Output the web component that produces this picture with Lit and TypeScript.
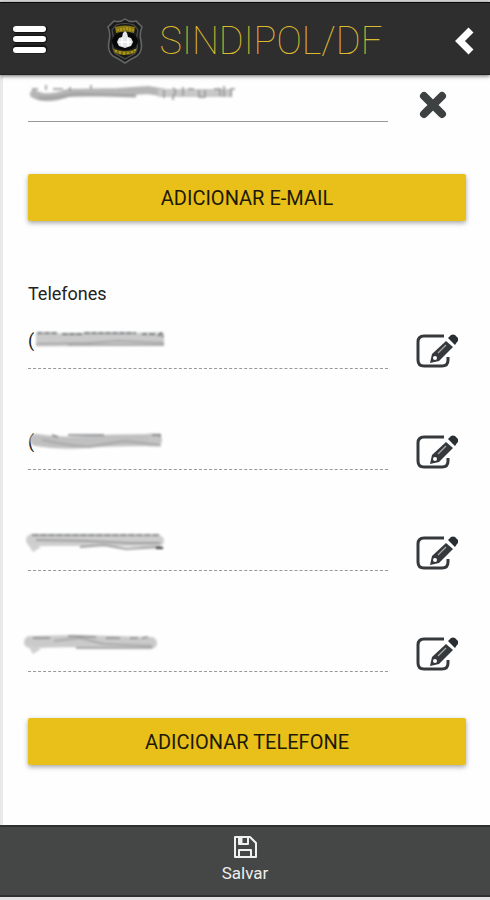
import { LitElement, html, css, svg } from "lit";
import { customElement } from "lit/decorators.js";

const badge = html`<svg class="badge" viewBox="0 0 40 48" aria-hidden="true">
  <path d="M20 2 Q25 6 31 4 L37 10 Q34 17 36 24 Q38 34 32 39 Q26 42 20 46 Q14 42 8 39 Q2 34 4 24 Q6 17 3 10 L9 4 Q15 6 20 2 Z" fill="#1a1a1a" stroke="#626466" stroke-width="1.6"/>
  <path d="M11 8 Q20 5 29 8 L33 13 Q31 19 32 26 Q33 34 29 37 L20 42 L11 37 Q7 34 8 26 Q9 19 7 13 Z" fill="none" stroke="#4d4f51" stroke-width="1.2"/>
  <path d="M10 10 Q20 7 30 10 L29 16 Q20 13 11 16 Z" fill="#8a7912"/>
  <path d="M13 12 v2 M16 11 v3 M19 11 v2 M22 10 v3 M25 11 v3 M28 12 v2" stroke="#c4ae2b" stroke-width="1"/>
  <ellipse cx="20" cy="24" rx="13" ry="9" fill="#080808"/>
  <path d="M12 25 L14 21 L17 20 L18 16 L20 14 L22 16 L23 20 L26 21 L28 25 L26 29 L20 31 L14 29 Z" fill="#e4e6e8"/>
  <path d="M14 25 h12 M17 21 v8 M23 21 v8" stroke="#fff" stroke-width="1.4"/>
  <path d="M8 31 Q12 34 20 34 Q28 34 32 31 L30 36 Q20 40 10 36 Z" fill="#7d6e10"/>
  <path d="M11 33 v2 M15 34 v3 M19 35 v3 M23 35 v2 M27 34 v2 M30 32 v2" stroke="#c4ae2b" stroke-width="1.2"/>
</svg>`;

const editIcon = html`<svg class="edit" viewBox="0 0 42 36" aria-hidden="true">
  <path d="M28 3 H8 Q2 3 2 9 V27 Q2 33 8 33 H26 Q32 33 32 27 V24" fill="none" stroke="#35393b" stroke-width="3"/>
  <path d="M30 8 L37 14 L23 28 L14 30 L16 21 Z" fill="#35393b"/>
  <path d="M32 5 L35 2 Q37 1 39 2 L42 5 Q43 7 41 9 L39 12 Z" fill="#292e33"/>
  <circle cx="19" cy="25" r="2" fill="#fff"/>
  <path d="M22 20 L30 12" stroke="#a8a8a8" stroke-width="1.2"/>
</svg>`;

const closeIcon = html`<svg class="close" viewBox="0 0 30 30" aria-hidden="true">
  <path d="M6 6 L24 24 M24 6 L6 24" stroke="#3d4142" stroke-width="8" stroke-linecap="round"/>
</svg>`;

const smears = {
  email: svg`
    <path d="M6 14 Q18 21 40 13 L90 12 L120 10 L138 13" fill="none" stroke="#b5b5b5" stroke-width="8" stroke-linecap="round"/>
    <path d="M130 13 H204" stroke="#c8c8c8" stroke-width="8"/>
    <path d="M10 18 Q25 19 48 14 L108 16" fill="none" stroke="#a4a4a4" stroke-width="3"/>
    <path d="M4 9 h6 M18 5 v5 M25 9 h10 M42 7 v4 M63 5 v4 M136 10 v8 M145 8 q5 3 0 8 v4 M155 7 v9 M160 9 h6 M171 10 v7 h6 v-7 M186 9 h6 v7 M196 6 v11 M203 17 v-8 h4" fill="none" stroke="#929292" stroke-width="1.5"/>`,
  a: svg`
    <path d="M8 13 L136 12" stroke="#cacaca" stroke-width="13"/>
    <path d="M8 17 L60 16 L90 14 L136 16 M40 18 H136" fill="none" stroke="#aaa" stroke-width="2"/>
    <path d="M9 6 H30 M34 7 H54 M56 6 H108 M114 7 h5 M121 7 h6 M130 9 l3 -3 l2 4" fill="none" stroke="#5b5f62" stroke-width="1.5" stroke-dasharray="6 1"/>`,
  b: svg`
    <path d="M8 12 Q32 16 58 14 T128 12" fill="none" stroke="#c0c0c0" stroke-width="12" stroke-linecap="round"/>
    <path d="M120 12 H133" stroke="#c4c4c4" stroke-width="13"/>
    <path d="M14 12 Q38 17 60 19 L96 13 L132 17" fill="none" stroke="#a8a8a8" stroke-width="2"/>
    <path d="M24 7 l6 2 M40 7 h36 M124 7 h8 v2" fill="none" stroke="#7c7f82" stroke-width="1.5"/>`,
  c: svg`
    <path d="M4 11 L65 11 L130 12" fill="none" stroke="#cecece" stroke-width="12" stroke-linecap="round"/>
    <path d="M8 11 L60 12 L100 14 L132 14 M52 18 L76 16 L98 20 L132 18" fill="none" stroke="#a0a0a0" stroke-width="2"/>
    <path d="M4 6 H132" fill="none" stroke="#6d7071" stroke-width="1.5" stroke-dasharray="7 1"/>
    <path d="M-1 14 l6 9 l8 -5" fill="#d0d0d0"/>
    <path d="M128 19 h7" stroke="#333" stroke-width="2"/>`,
  d: svg`
    <path d="M2 12 L48 11 L123 13" fill="none" stroke="#cacaca" stroke-width="12" stroke-linecap="round"/>
    <path d="M26 11 L52 8 L76 14 L124 16 M48 18 H124" fill="none" stroke="#aaa" stroke-width="2"/>
    <path d="M5 8 H22 M40 6 L68 7 M78 8 H92 M102 8 h8 M114 8 l6 -1" fill="none" stroke="#888" stroke-width="1.5"/>
    <path d="M-1 14 l6 10 l8 -5" fill="#d0d0d0"/>`,
};

const phones = [
  { start: "(", smear: smears.a },
  { start: "(", smear: smears.b },
  { start: "", smear: smears.c },
  { start: "", smear: smears.d },
];

@customElement("app-root")
export class AppRoot extends LitElement {
  static styles = css`
    :host {
      display: flex;
      flex-direction: column;
      min-height: 100vh;
      box-sizing: border-box;
      border-top: 2px solid #dcdcdc;
      border-bottom: 3px solid #e2e2e2;
      background: #fefefe;
      color: #222;
      font-family: Roboto, sans-serif;
      font-size: 18px;
    }
    * { box-sizing: border-box; }
    button {
      border: 0;
      padding: 0;
      background: none;
      font: inherit;
      color: inherit;
      cursor: pointer;
    }
    svg { display: block; }
    .bar {
      display: flex;
      align-items: center;
      justify-content: space-between;
      height: 73px;
      padding: 4px 16px 0 12px;
      background: #2e2e2e;
      border-top: 1px solid #080808;
      border-bottom: 1px solid #222;
      box-shadow: 0 1px 4px rgba(0, 0, 0, 0.6);
      position: relative;
    }
    .menu svg { width: 36px; height: 30px; }
    .back svg { width: 20px; height: 30px; }
    .brand {
      display: flex;
      align-items: center;
      gap: 15px;
      padding-right: 15px;
    }
    .badge { width: 40px; height: 48px; }
    h1 {
      margin: 0;
      font-size: 38px;
      line-height: 48px;
      font-weight: 100;
      white-space: nowrap;
      color: #dcba30;
    }
    main {
      flex: 1;
      padding: 0 24px 60px 25px;
      border-left: 3px solid #e9e9e9;
    }
    .row {
      display: grid;
      grid-template-columns: 1fr 50px;
      column-gap: 28px;
      align-items: end;
    }
    .row + .row { margin-top: 36px; }
    .field { position: relative; }
    .field input {
      display: block;
      width: 100%;
      height: 65px;
      padding: 8px 0 0;
      border: 0;
      border-bottom: 1px dashed #999;
      border-radius: 0;
      outline: 0;
      background: none;
      font: inherit;
      color: #222;
    }
    .email input {
      height: 47px;
      border-bottom: 1px solid #999;
    }
    .smear {
      position: absolute;
      left: 0;
      bottom: 14px;
      width: 216px;
      height: 28px;
      overflow: visible;
      pointer-events: none;
      filter: blur(1px);
    }
    .edit { width: 42px; height: 36px; }
    .close { width: 30px; height: 30px; margin: 0 0 2px 2px; }
    .add {
      display: block;
      width: 100%;
      height: 47px;
      border-radius: 2px;
      background: #e8c019;
      box-shadow: 0 2px 5px rgba(0, 0, 0, 0.35);
      font-size: 20px;
      color: #1d1a08;
    }
    .email + .add { margin-top: 52px; }
    .phones + .add { margin-top: 46px; }
    h2 {
      margin: 63px 0 0;
      font-size: 18px;
      line-height: 20px;
      font-weight: 400;
    }
    footer {
      background: #454746;
      border-top: 2px solid #303030;
      border-bottom: 2px solid #303030;
      color: #eee;
    }
    .save {
      display: flex;
      flex-direction: column;
      align-items: center;
      gap: 2px;
      width: 100%;
      height: 68px;
      padding-top: 8px;
      font-size: 17px;
      line-height: 24px;
    }
    .save svg { width: 24px; height: 24px; }
  `;

  render() {
    return html`
      <header class="bar">
        <button class="menu" aria-label="Menu">
          <svg viewBox="0 0 36 30" aria-hidden="true">
            <path d="M5 3 H31 M5 13 H31 M5 23 H31" stroke="#141414" stroke-width="9" stroke-linecap="round"/>
            <path d="M4 3 H31 M4 13 H31 M4 24 H31" stroke="#fff" stroke-width="6" stroke-linecap="round"/>
          </svg>
        </button>
        <div class="brand">${badge}<h1>SINDIPOL/DF</h1></div>
        <button class="back" aria-label="Voltar">
          <svg viewBox="0 0 20 30" aria-hidden="true">
            <path d="M17 4 L6 15 L17 26" fill="none" stroke="#fff" stroke-width="7"/>
          </svg>
        </button>
      </header>
      <main>
        <div class="row email">
          <div class="field">
            <input type="email" aria-label="E-mail" />
            <svg class="smear" viewBox="0 0 216 28" aria-hidden="true">${smears.email}</svg>
          </div>
          <button aria-label="Remover e-mail">${closeIcon}</button>
        </div>
        <button class="add">ADICIONAR E-MAIL</button>
        <h2 id="phones">Telefones</h2>
        <div class="phones" role="group" aria-labelledby="phones">
          ${phones.map(
            (p, i) => html`<div class="row">
              <div class="field">
                <input type="tel" readonly aria-label="Telefone ${i + 1}" .value=${p.start} />
                <svg class="smear" viewBox="0 0 216 28" aria-hidden="true">${p.smear}</svg>
              </div>
              <button aria-label="Editar telefone ${i + 1}">${editIcon}</button>
            </div>`
          )}
        </div>
        <button class="add">ADICIONAR TELEFONE</button>
      </main>
      <footer>
        <button class="save">
          <svg viewBox="0 0 24 24" fill="none" stroke="#f0f0f0" stroke-width="2" stroke-linejoin="round" aria-hidden="true">
            <path d="M2 2 H17 L23 8 V22 H2 Z"/>
            <path d="M6 2 V9 H15 V2 M6 22 V15 H18 V22"/>
            <path d="M8 3 V8" stroke-width="3"/>
          </svg>
          Salvar
        </button>
      </footer>
    `;
  }
}
